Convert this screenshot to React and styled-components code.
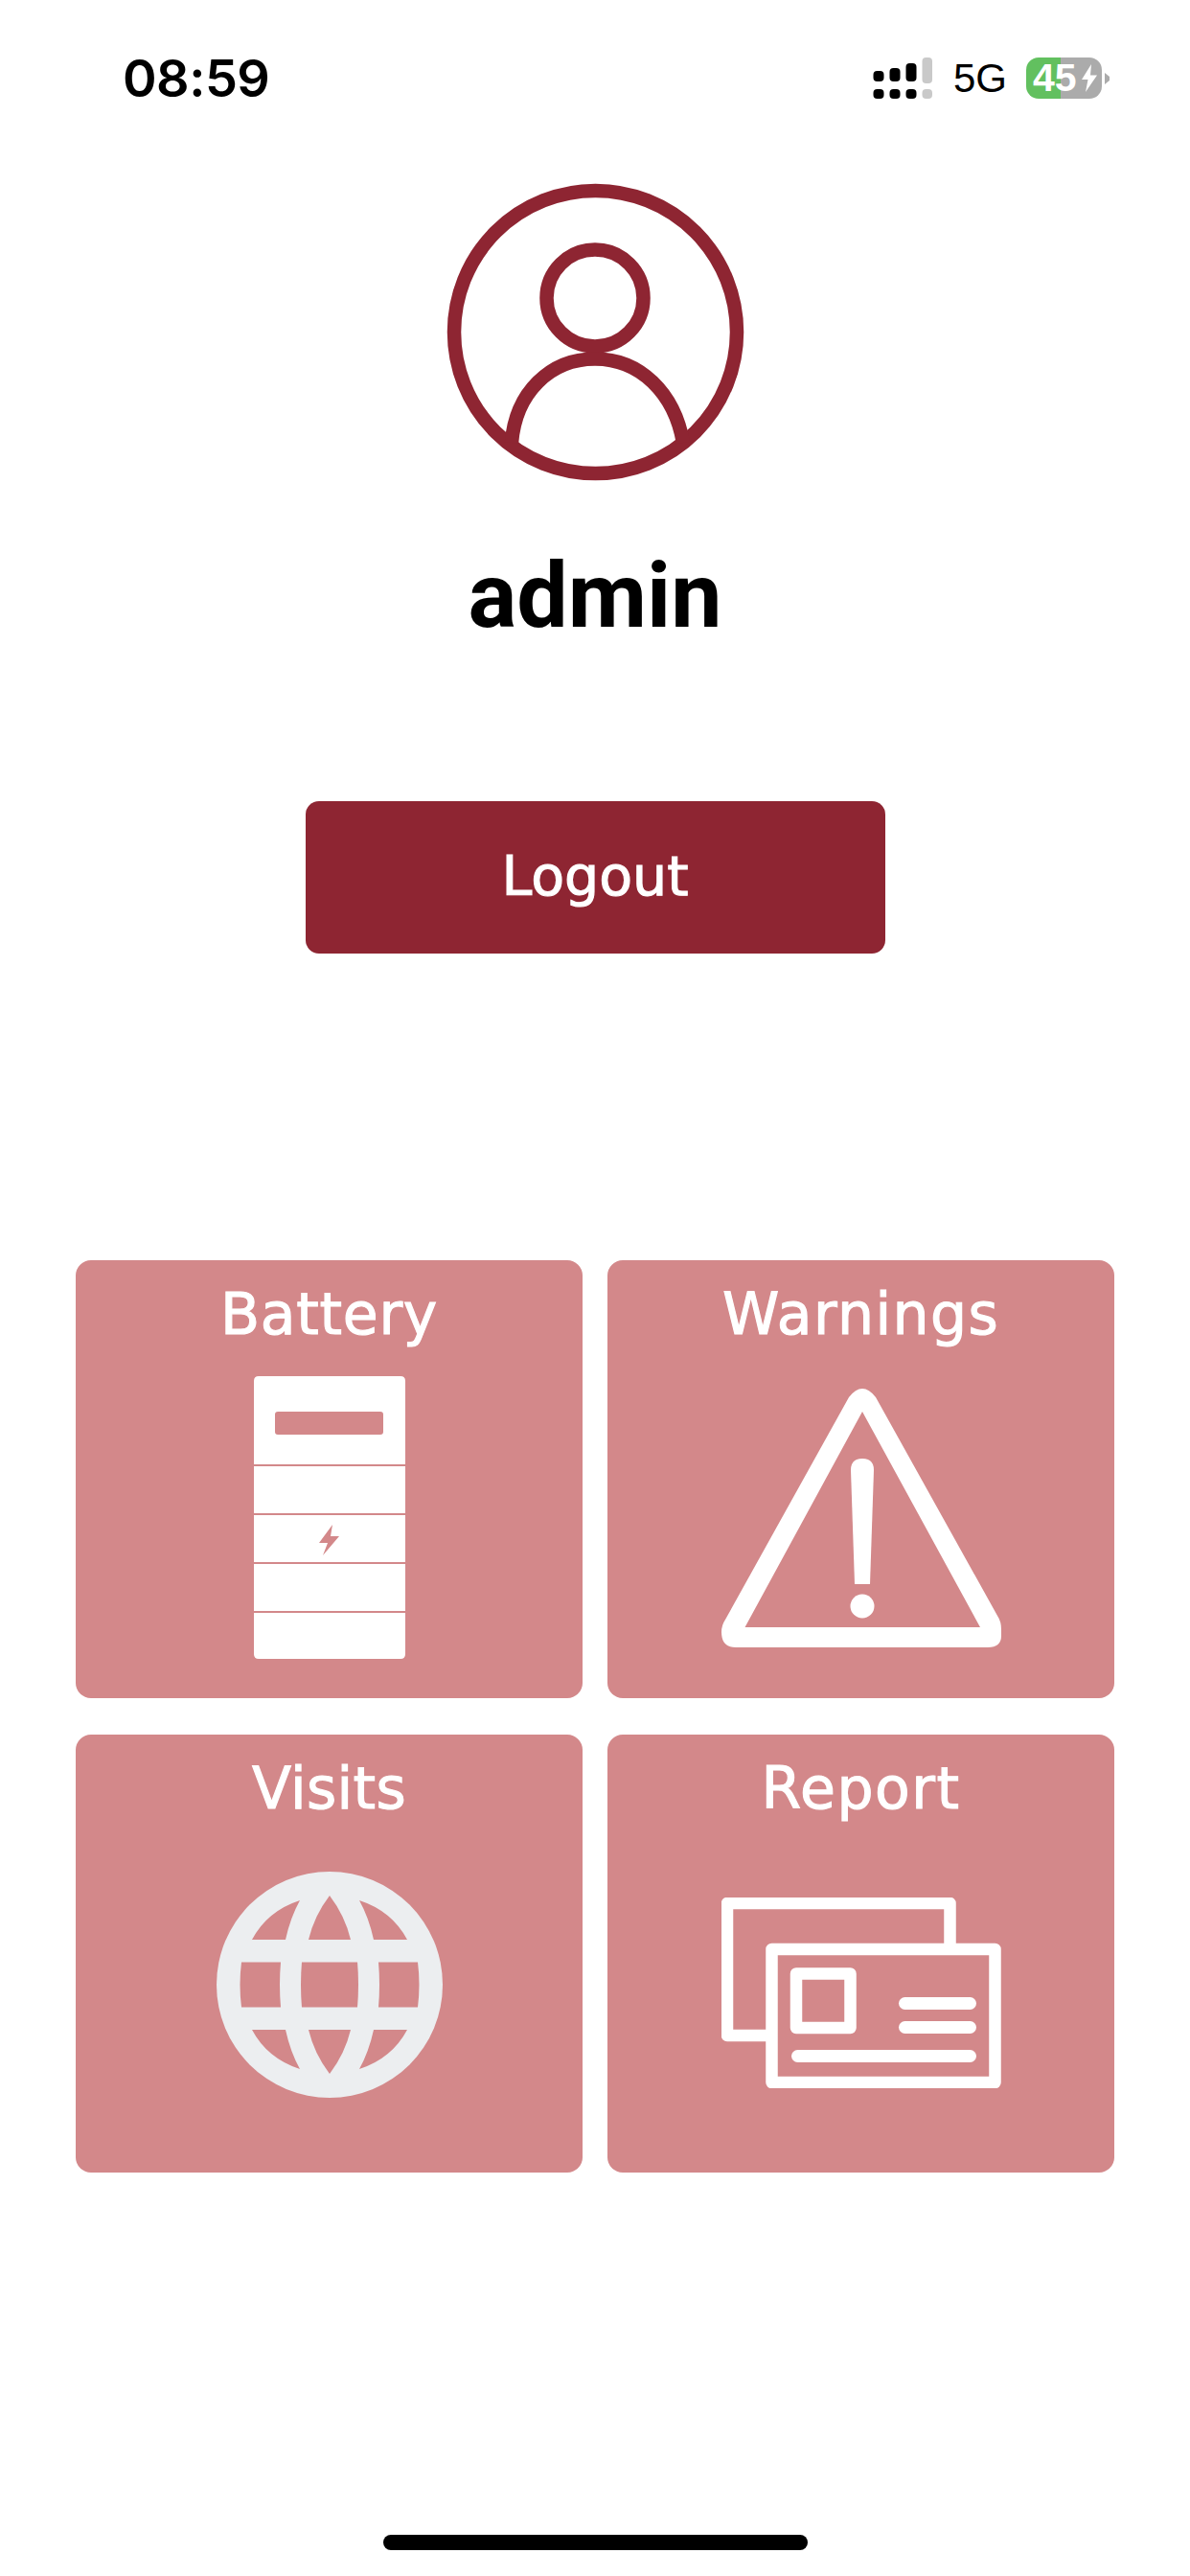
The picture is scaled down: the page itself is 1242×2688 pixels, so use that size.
import React from "react";
import styled, { createGlobalStyle } from "styled-components";

const Global = createGlobalStyle`
  html, body { margin: 0; padding: 0; background: #fff; }
  body { font-family: "Inter", "Liberation Sans", sans-serif; }
`;

const Page = styled.div`
  width: 1242px;
  min-height: 2688px;
  display: flex;
  flex-direction: column;
  align-items: center;
  background: #fff;
`;

const StatusBar = styled.header`
  align-self: stretch;
  height: 43px;
  margin-top: 60px;
  padding: 0 84px 0 128px;
  display: flex;
  align-items: center;
  justify-content: space-between;
`;

const Clock = styled.span`
  font-family: "Inter", sans-serif;
  font-size: 54px;
  font-weight: 600;
  letter-spacing: -0.5px;
  line-height: 43px;
  color: #000;
`;

const StatusGroup = styled.div`
  display: flex;
  align-items: center;
`;

const SignalIcon = styled.svg`
  display: block;
`;

const Network = styled.span`
  margin-left: 22px;
  font-family: "Liberation Sans", sans-serif;
  font-size: 42px;
  line-height: 43px;
  color: #000;
`;

const BatteryBody = styled.div`
  margin-left: 20px;
  width: 79px;
  height: 43px;
  border-radius: 13px;
  display: flex;
  align-items: center;
  padding-left: 7px;
  box-sizing: border-box;
  background: linear-gradient(90deg, #62c05f 0 45.5%, #ababab 45.5% 100%);
`;

const BatteryText = styled.span`
  font-family: "Liberation Sans", sans-serif;
  font-size: 41px;
  font-weight: 700;
  line-height: 43px;
  color: #fff;
`;

const BatteryBolt = styled.svg`
  display: block;
  margin-left: 5px;
`;

const BatteryTip = styled.svg`
  display: block;
  margin-left: 3px;
`;

const Avatar = styled.svg`
  display: block;
  margin-top: 88px;
`;

const Name = styled.h1`
  margin: 65px 0 0;
  font-family: "Roboto", sans-serif;
  font-size: 95px;
  font-weight: 700;
  line-height: 110px;
  color: #000;
`;

const LogoutButton = styled.button`
  margin-top: 159px;
  width: 605px;
  height: 159px;
  padding: 0 0 3px;
  border: 0;
  border-radius: 14px;
  background: #8e2532;
  color: #fff;
  font-family: "DejaVu Sans", sans-serif;
  font-size: 57px;
  -webkit-text-stroke: 1.1px #fff;
`;

const Grid = styled.section`
  margin-top: 320px;
  display: grid;
  grid-template-columns: 529px 529px;
  grid-auto-rows: 457px;
  column-gap: 26px;
  row-gap: 38px;
`;

const Card = styled.div`
  padding-top: 21px;
  box-sizing: border-box;
  border-radius: 16px;
  background: #d3888a;
  display: flex;
  flex-direction: column;
  align-items: center;
`;

const CardLabel = styled.div`
  font-family: "DejaVu Sans", sans-serif;
  font-size: 60px;
  line-height: 70px;
  letter-spacing: ${(p) => p.$spacing}px;
  -webkit-text-stroke: 1.1px #fff;
  color: #fff;
`;

const CardIcon = styled.svg`
  display: block;
  margin-top: ${(p) => p.$top}px;
`;

const HomeIndicator = styled.div`
  margin-top: 378px;
  width: 443px;
  height: 16px;
  border-radius: 8px;
  background: #000;
`;

const SignalBars = () => (
  <SignalIcon width="62" height="43" viewBox="908 60 62 43">
    <g fill="#000">
      <rect x="908.5" y="74" width="11" height="11" rx="4" />
      <rect x="925.5" y="71" width="11" height="14" rx="4" />
      <rect x="942.5" y="66" width="11" height="19" rx="4" />
      <rect x="908.5" y="93" width="11" height="10" rx="4" />
      <rect x="925.5" y="93" width="11" height="10" rx="4" />
      <rect x="942.5" y="93" width="11" height="10" rx="4" />
    </g>
    <g fill="#c9c9c9">
      <rect x="959.5" y="60" width="10.5" height="27" rx="4" />
      <rect x="959.5" y="93" width="10.5" height="10" rx="4" />
    </g>
  </SignalIcon>
);

const AvatarIcon = () => (
  <Avatar width="311" height="311" viewBox="466 191 311 311">
    <g fill="none" stroke="#8e2532" strokeWidth="14.5">
      <circle cx="621.5" cy="346.5" r="147.5" />
      <circle cx="621" cy="311" r="50.5" />
      <path d="M534 462 C538 410 574 374.5 621 374.5 C668 374.5 704 410 713 462" />
    </g>
  </Avatar>
);

const BatteryIcon = () => (
  <CardIcon $top={30} width="158" height="295" viewBox="265 1436 158 295">
    <path
      fillRule="evenodd"
      fill="#fff"
      d="M270 1436 H418 Q423 1436 423 1441 V1726 Q423 1731 418 1731 H270 Q265 1731 265 1726 V1441 Q265 1436 270 1436 Z M290 1473 Q287 1473 287 1476 V1494 Q287 1497 290 1497 H397 Q400 1497 400 1494 V1476 Q400 1473 397 1473 Z"
    />
    <g fill="#d3888a">
      <rect x="265" y="1528" width="158" height="2" />
      <rect x="265" y="1579" width="158" height="2" />
      <rect x="265" y="1630" width="158" height="2" />
      <rect x="265" y="1681" width="158" height="2" />
      <path d="M347 1591 L333 1610 H342 L337 1623 L354 1603 H345 Z" />
    </g>
  </CardIcon>
);

const WarningIcon = () => (
  <CardIcon $top={41} width="292" height="272" viewBox="753 1447 292 272">
    <path
      fillRule="evenodd"
      fill="#fff"
      d="M886 1458 Q900 1440 914 1458 L1041 1686 Q1045 1692 1045 1700 V1707 Q1045 1719 1031 1719 H768 Q753 1719 753 1703 Q753 1696 757 1690 Z M900 1473 L777.5 1698 H1023 Z"
    />
    <path fill="#fff" d="M888 1534 Q888 1522 900 1522 Q912 1522 912 1534 L908 1653 H892 Z" />
    <circle cx="900" cy="1676" r="12.5" fill="#fff" />
  </CardIcon>
);

const GlobeIcon = () => (
  <CardIcon $top={52} width="236" height="236" viewBox="-118 -118 236 236">
    <circle r="118" fill="#eceef0" />
    <g fill="#d3888a">
      <path d="M0 -93 Q-16 -72 -22 -47 H22 Q16 -72 0 -93 Z" />
      <path d="M-31 -88 Q-65 -77 -81 -47 H-46 Q-41 -70 -31 -88 Z" />
      <path d="M31 -88 Q65 -77 81 -47 H46 Q41 -70 31 -88 Z" />
      <path d="M0 93 Q-16 72 -22 47 H22 Q16 72 0 93 Z" />
      <path d="M-31 88 Q-65 77 -81 47 H-46 Q-41 70 -31 88 Z" />
      <path d="M31 88 Q65 77 81 47 H46 Q41 70 31 88 Z" />
      <path d="M-92 -23.5 H-51 Q-53 0 -51 23.5 H-92 Q-95 0 -92 -23.5 Z" />
      <path d="M-29 -23.5 H29 Q31 0 29 23.5 H-29 Q-31 0 -29 -23.5 Z" />
      <path d="M92 -23.5 H51 Q53 0 51 23.5 H92 Q95 0 92 -23.5 Z" />
    </g>
  </CardIcon>
);

const ReportIcon = () => (
  <CardIcon $top={79} width="292" height="199" viewBox="753 1980 292 199">
    <g fill="none" stroke="#fff" strokeWidth="12.5" strokeLinejoin="round">
      <path d="M805 2124 H759 V1986 H991.5 V2034" />
      <rect x="805.5" y="2034" width="233" height="139" />
      <rect x="831" y="2059.5" width="56.5" height="56.5" />
    </g>
    <g stroke="#fff" strokeWidth="13" strokeLinecap="round">
      <path d="M944.5 2090.5 H1012.5" />
      <path d="M944.5 2115.5 H1012.5" />
      <path d="M832.5 2145.5 H1012.5" />
    </g>
  </CardIcon>
);

const tiles = [
  { label: "Battery", spacing: 0.7, Icon: BatteryIcon },
  { label: "Warnings", spacing: 1.4, Icon: WarningIcon },
  { label: "Visits", spacing: 0.3, Icon: GlobeIcon },
  { label: "Report", spacing: 1.5, Icon: ReportIcon },
];

export default function App() {
  return (
    <Page>
      <Global />
      <StatusBar>
        <Clock>08:59</Clock>
        <StatusGroup>
          <SignalBars />
          <Network>5G</Network>
          <BatteryBody>
            <BatteryText>45</BatteryText>
            <BatteryBolt width="16" height="29" viewBox="0 0 16 29">
              <path d="M10 0 L0 16 H6.5 L4 29 L16 11.5 H9 Z" fill="#fff" />
            </BatteryBolt>
          </BatteryBody>
          <BatteryTip width="5" height="12" viewBox="0 0 5 12">
            <path d="M0 0 L5 4 V8 L0 12 Z" fill="#ababab" />
          </BatteryTip>
        </StatusGroup>
      </StatusBar>
      <AvatarIcon />
      <Name>admin</Name>
      <LogoutButton>Logout</LogoutButton>
      <Grid>
        {tiles.map(({ label, spacing, Icon }) => (
          <Card key={label}>
            <CardLabel $spacing={spacing}>{label}</CardLabel>
            <Icon />
          </Card>
        ))}
      </Grid>
      <HomeIndicator />
    </Page>
  );
}
